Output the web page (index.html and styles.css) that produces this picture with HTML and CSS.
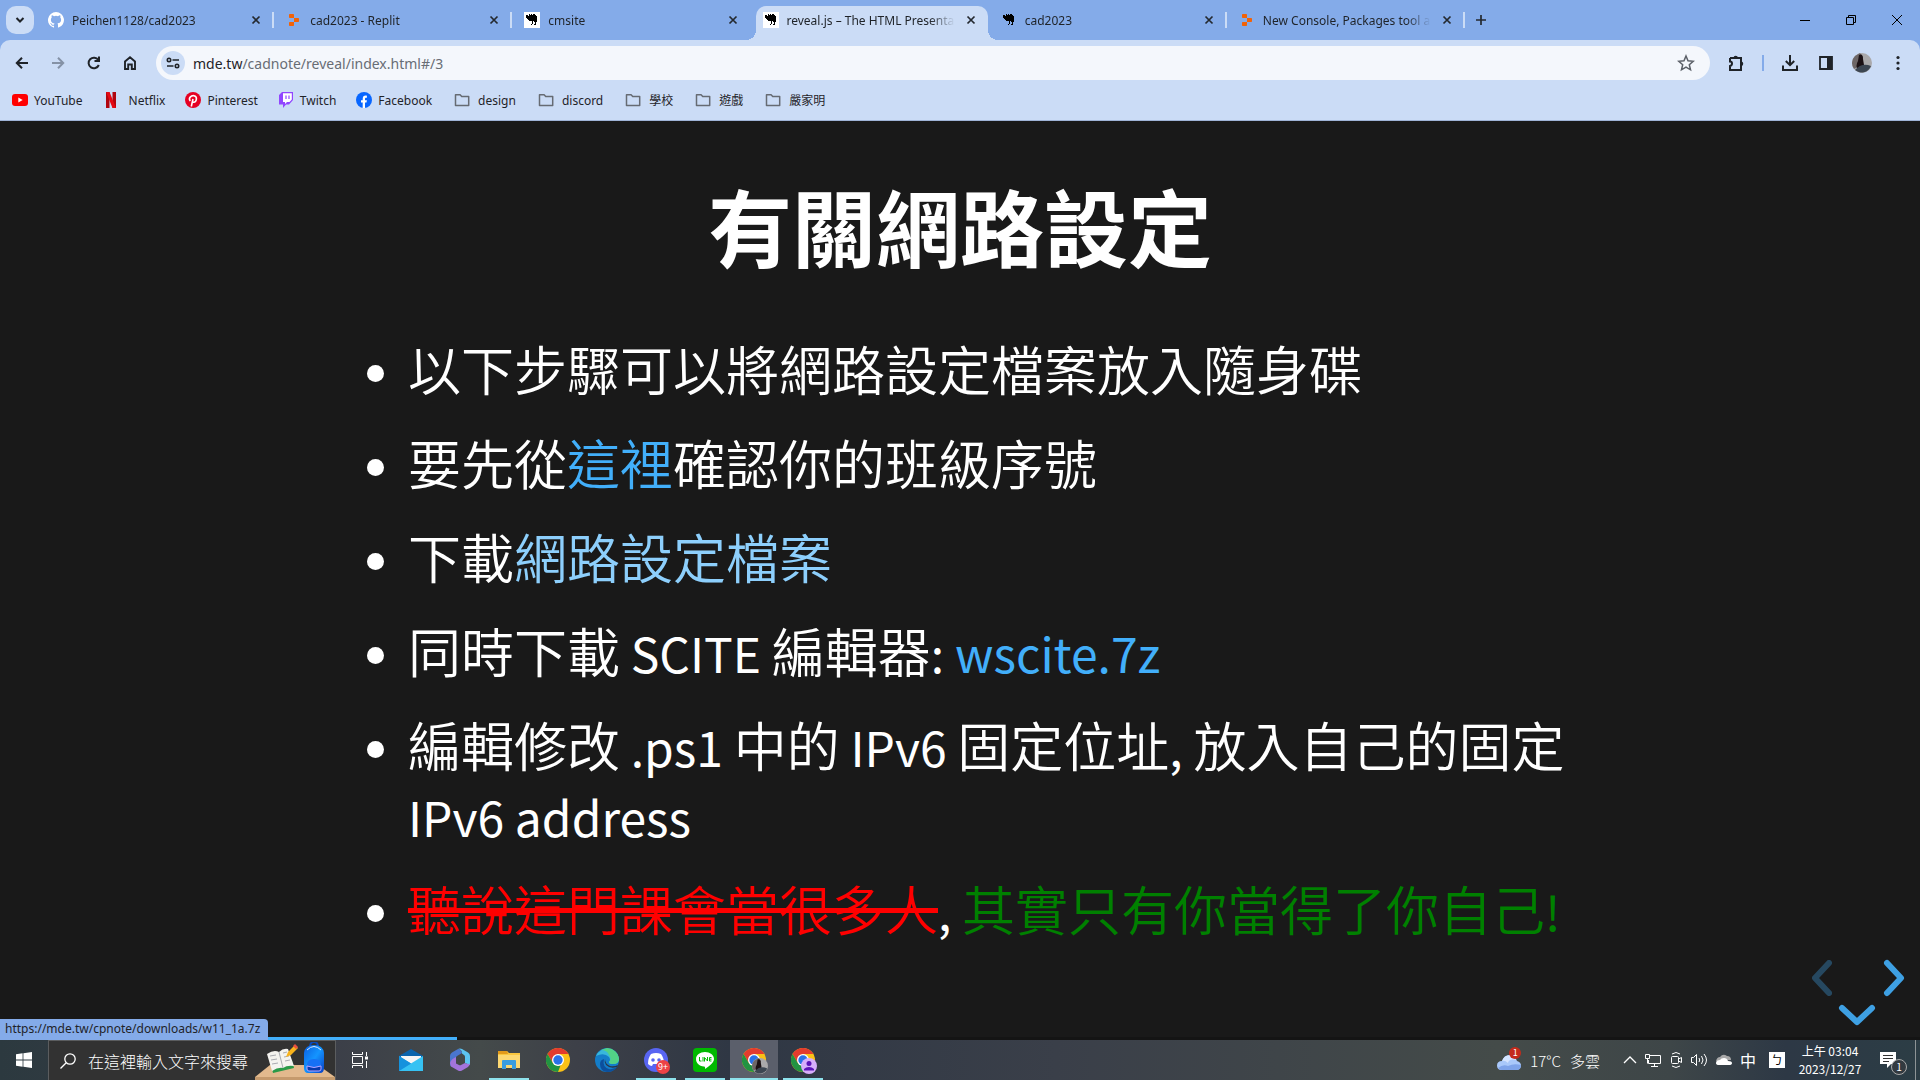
FILE: index.html
```
<!DOCTYPE html>
<html lang="zh-Hant">
<head>
<meta charset="utf-8">
<title>reveal.js – The HTML Presentation Framework</title>
<link rel="stylesheet" href="styles.css">
</head>
<body>
<svg class="defs" aria-hidden="true">
  <defs>
    <symbol id="close" viewBox="0 0 16 16"><path d="M4.500 4.500l7 7M11.500 4.500l-7 7" stroke="#24292f" stroke-width="1.700" fill="none"/></symbol>
    <symbol id="folder" viewBox="0 0 16 16"><path d="M1.500 2.800h4.600l1.600 1.700h7v9H1.500z" stroke="#666b73" stroke-width="1.500" stroke-linejoin="round" fill="none"/></symbol>
    <symbol id="replit" viewBox="0 0 16 16"><path d="M3.800 2H7.200a.8.8 0 0 1 .8.800V6H3.800a.8.8 0 0 1-.8-.8V2.800a.8.8 0 0 1 .8-.8zM8 6h4.200a.8.8 0 0 1 .8.800v2.400a.8.8 0 0 1-.8.800H8zM3.800 10H8v3.200a.8.800 0 0 1-.8.800H3.800a.8.8 0 0 1-.8-.8v-2.400a.8.8 0 0 1 .8-.8z" fill="#f26207"/></symbol>
    <symbol id="camel" viewBox="0 0 16 16"><path d="M5 2h1v1h1V2h1v1h1V2h2v1h1v1h1v6h-1v3h-2v-1h1v-2h-1v-1H9v3H8v1H7v-1h1V9H5V8H4V7H3V6H2V3h2v1h1z"/></symbol>
    <symbol id="chrome" viewBox="0 0 24 24"><circle cx="12" cy="12" r="12" fill="#fbc116"/><path d="M12 6h10.400A12 12 0 0 0 1.600 6l5.200 9z" fill="#e33b2e"/><path d="M1.600 6l5.200 9 5.200 3 2.600-.7L12 24A12 12 0 0 1 1.600 6z" fill="#229342"/><circle cx="12" cy="12" r="6" fill="#fff"/><circle cx="12" cy="12" r="4.700" fill="#2a72e8"/></symbol>
    <symbol id="avatar" viewBox="0 0 20 20"><circle cx="10" cy="10" r="10" fill="#aaa9ab"/><path d="M3 3a10 10 0 0 0-1 13l7-4 2-8-3-4z" fill="#6d6666"/><path d="M7 2q4-2 4 4l1 6-6 5q-3-4 0-9z" fill="#1b1114"/><path d="M3 17q7-8 16-4a10 10 0 0 1-16 4z" fill="#3c4652"/></symbol>
  </defs>
</svg>

<header class="browser">
  <div class="tabstrip">
    <button class="tab-search" aria-label="搜尋分頁"><svg width="16" height="16" viewBox="0 0 16 16"><path d="M4.500 6l3.500 3.500L11.500 6" fill="none" stroke="#1f2328" stroke-width="2"/></svg></button>
    <div class="tabs">
      <div class="tab divided"><svg class="fav" viewBox="0 0 16 16"><path fill="#fff" d="M8 0a8 8 0 0 0-2.530 15.590c.4.070.55-.17.550-.38v-1.490c-2.230.480-2.700-.95-2.700-.95-.36-.93-.89-1.170-.89-1.170-.73-.5.050-.49.050-.49.800.060 1.230.830 1.230.830.720 1.220 1.870.870 2.330.660.070-.52.280-.87.500-1.070-1.770-.2-3.640-.89-3.640-3.950 0-.87.310-1.590.820-2.150-.08-.2-.36-1.020.080-2.120 0 0 .67-.21 2.200.820a7.600 7.600 0 0 1 4 0c1.530-1.040 2.200-.82 2.200-.82.440 1.100.160 1.920.080 2.120.510.560.820 1.270.820 2.150 0 3.070-1.870 3.750-3.650 3.950.290.250.540.730.540 1.480v2.190c0 .21.150.460.550.380A8 8 0 0 0 8 0z"/></svg><span class="tab-title">Peichen1128/cad2023</span><button class="tab-close" aria-label="關閉"><svg><use href="#close"/></svg></button></div>
      <div class="tab divided"><svg class="fav"><use href="#replit"/></svg><span class="tab-title">cad2023 - Replit</span><button class="tab-close" aria-label="關閉"><svg><use href="#close"/></svg></button></div>
      <div class="tab"><svg class="fav white"><use href="#camel"/></svg><span class="tab-title">cmsite</span><button class="tab-close" aria-label="關閉"><svg><use href="#close"/></svg></button></div>
      <div class="tab active"><svg class="fav white"><use href="#camel"/></svg><span class="tab-title">reveal.js – The HTML Presenta</span><button class="tab-close" aria-label="關閉"><svg><use href="#close"/></svg></button></div>
      <div class="tab divided"><svg class="fav"><use href="#camel"/></svg><span class="tab-title">cad2023</span><button class="tab-close" aria-label="關閉"><svg><use href="#close"/></svg></button></div>
      <div class="tab divided"><svg class="fav"><use href="#replit"/></svg><span class="tab-title">New Console, Packages tool a</span><button class="tab-close" aria-label="關閉"><svg><use href="#close"/></svg></button></div>
    </div>
    <button class="new-tab" aria-label="新分頁"><svg width="16" height="16" viewBox="0 0 16 16"><path d="M8 3v10M3 8h10" stroke="#24292f" stroke-width="1.700"/></svg></button>
    <div class="window-buttons">
      <button aria-label="最小化"><svg width="12" height="12" viewBox="0 0 12 12"><path d="M1 6.500h10" stroke="#000"/></svg></button>
      <button aria-label="還原"><svg width="12" height="12" viewBox="0 0 12 12"><path d="M1.500 3.500h7v7h-7zM3.500 3.500v-2h7v7h-2" fill="none" stroke="#000"/></svg></button>
      <button aria-label="關閉"><svg width="12" height="12" viewBox="0 0 12 12"><path d="M1 1l10 10M11 1L1 11" stroke="#000"/></svg></button>
    </div>
  </div>

  <div class="toolbar">
    <nav class="nav-buttons">
      <button aria-label="上一頁"><svg width="16" height="16" viewBox="0 0 16 16"><path d="M14 8H3M8 2.800L2.800 8 8 13.200" fill="none" stroke="#1f2328" stroke-width="2"/></svg></button>
      <button aria-label="下一頁"><svg width="16" height="16" viewBox="0 0 16 16"><path d="M2 8h11M8 2.800L13.200 8 8 13.200" fill="none" stroke="#8592a6" stroke-width="2"/></svg></button>
      <button aria-label="重新載入"><svg width="16" height="16" viewBox="0 0 16 16"><path d="M12.800 10A5.300 5.300 0 1 1 12.300 5" fill="none" stroke="#1f2328" stroke-width="2"/><path d="M14 1.500V7H8.500V5H12V1.500z" fill="#1f2328"/></svg></button>
      <button aria-label="首頁"><svg width="16" height="16" viewBox="0 0 16 16"><path d="M3 14V6.500L8 2.300l5 4.200V14H9.800V9.500H6.200V14z" fill="none" stroke="#1f2328" stroke-width="1.900"/></svg></button>
    </nav>
    <div class="omnibox">
      <button class="site-info" aria-label="網站資訊"><svg width="16" height="16" viewBox="0 0 16 16"><g fill="none" stroke="#1f2328" stroke-width="1.600"><circle cx="4" cy="5" r="1.700"/><circle cx="12" cy="11" r="1.700"/><path d="M7.500 5H14M2 11h6.500"/></g></svg></button>
      <a class="url" href="#/3">mde.tw<span>/cadnote/reveal/index.html#/3</span></a>
      <button class="star" aria-label="加入書籤"><svg width="18" height="18" viewBox="0 0 18 18"><path d="M9 2l2 4.800 5.200.500-3.900 3.400 1.200 5.100L9 13.100l-4.500 2.700 1.200-5.100L1.800 7.300 7 6.800z" fill="none" stroke="#5b6068" stroke-width="1.500"/></svg></button>
    </div>
    <div class="tools">
      <button aria-label="擴充功能"><svg width="18" height="18" viewBox="0 0 18 18"><path d="M3 4h11v4.500M14 8v8H3v-4q2-.5 2-2.500T3 7.500V4" fill="none" stroke="#1f2328" stroke-width="2"/><path d="M6.500 4a2.200 2.200 0 0 1 4.400 0zM14 7.500a2.200 2.200 0 0 1 0 4.500z" fill="#1f2328"/></svg></button>
      <i class="tool-divider"></i>
      <button aria-label="下載"><svg width="18" height="18" viewBox="0 0 18 18"><path d="M9 1v10M4.800 7L9 11.200 13.200 7M2 11.500V16h14v-4.500" fill="none" stroke="#1f2328" stroke-width="2"/></svg></button>
      <button aria-label="側邊面板"><svg width="18" height="18" viewBox="0 0 18 18"><path d="M3 3h12v12H3z" fill="none" stroke="#1f2328" stroke-width="1.800"/><path d="M10 3h5v12h-5z" fill="#1f2328"/></svg></button>
      <button aria-label="個人資料"><svg width="20" height="20"><use href="#avatar"/></svg></button>
      <button aria-label="選單"><svg width="18" height="18" viewBox="0 0 18 18" fill="#1f2328"><circle cx="9" cy="3.500" r="1.600"/><circle cx="9" cy="9" r="1.600"/><circle cx="9" cy="14.500" r="1.600"/></svg></button>
    </div>
  </div>

  <nav class="bookmarks">
    <a href="#yt"><svg viewBox="0 0 16 16"><rect y="2" width="16" height="12" rx="3" fill="#f00"/><path d="M6.300 5.500v5l4.400-2.500z" fill="#fff"/></svg>YouTube</a>
    <a href="#nf" class="wide"><svg viewBox="0 0 16 16"><path d="M3 0h3.500v16H3zM9.500 0H13v16H9.500z" fill="#b1060f"/><path d="M3 0h3.500L13 16H9.500z" fill="#e50914"/></svg>Netflix</a>
    <a href="#pin"><svg viewBox="0 0 16 16"><circle cx="8" cy="8" r="8" fill="#e60023"/><path d="M6.300 14.500L8 7M5.300 9Q3.600 7 5.200 5.100 6.700 3.400 9 3.700q2.700.6 2.400 3.300Q11 10.200 8.700 10.300q-1.200-.1-1.600-.9" fill="none" stroke="#fff" stroke-width="1.600"/></svg>Pinterest</a>
    <a href="#tw"><svg viewBox="0 0 16 16"><path d="M4 0h11v8l-4 4.500H8L5 16v-3.500H1V3z" fill="#9146ff"/><path d="M5 1.200h8.800v6.300L11.500 10H9l-2 2v-2H5z" fill="#fff"/><path d="M8 3.500v3.500M11 3.500v3.500" stroke="#9146ff" stroke-width="1.200"/></svg>Twitch</a>
    <a href="#fb"><svg viewBox="0 0 16 16"><circle cx="8" cy="8" r="8" fill="#0866ff"/><path d="M6.700 15.900v-5.300H5V8.200h1.700V7c0-2.700 1.300-3.700 4.200-3.300v2.100c-1.500-.1-1.900.1-1.900 1.300v1.100h1.900l-.4 2.400H9v5.300z" fill="#fff"/></svg>Facebook</a>
    <a href="#design" class="folder"><svg><use href="#folder"/></svg>design</a>
    <a href="#discord" class="folder"><svg><use href="#folder"/></svg>discord</a>
    <a href="#school" class="folder"><svg><use href="#folder"/></svg>學校</a>
    <a href="#game" class="folder"><svg><use href="#folder"/></svg>遊戲</a>
    <a href="#yen" class="folder"><svg><use href="#folder"/></svg>嚴家明</a>
  </nav>
</header>

<main class="reveal">
  <section class="slide">
    <h1>有關網路設定</h1>
    <ul>
      <li>以下步驟可以將網路設定檔案放入隨身碟</li>
      <li>要先從<a href="#list">這裡</a>確認你的班級序號</li>
      <li>下載<a href="#w11" class="hovered">網路設定檔案</a></li>
      <li>同時下載<span class="latin"> SCITE </span>編輯器<span class="latin">: <a href="#wscite">wscite.7z</a></span></li>
      <li>編輯修改<span class="latin"> .ps1 </span>中的<span class="latin"> IPv6 </span>固定位址<span class="latin">, </span>放入自己的固定<span class="latin"> IPv6 address</span></li>
      <li><del>聽說這門課會當很多人</del><span class="latin">, </span><span class="green">其實只有你當得了你自己<span class="latin">!</span></span></li>
    </ul>
  </section>
  <div class="controls">
    <button class="left" aria-label="previous slide"><svg width="22" height="40" viewBox="0 0 22 40"><path d="M18 5L4 20l14 15"/></svg></button>
    <button class="right" aria-label="next slide"><svg width="22" height="40" viewBox="0 0 22 40"><path d="M4 5l14 15L4 35"/></svg></button>
    <button class="down" aria-label="below slide"><svg width="40" height="22" viewBox="0 0 40 22"><path d="M5 4l15 14L35 4"/></svg></button>
  </div>
  <div class="progress"><i></i></div>
  <div class="status">https://mde.tw/cpnote/downloads/w11_1a.7z</div>
</main>

<footer class="taskbar">
  <button class="start" aria-label="開始"><svg width="16" height="16" viewBox="0 0 16 16" fill="#fff"><path d="M0 2.200l6.600-.9v6.300H0zM7.400 1.200L16 0v7.600H7.400zM0 8.400h6.600v6.300L0 13.800zM7.400 8.400H16V16l-8.600-1.200z"/></svg></button>
  <label class="search">
    <svg width="16" height="16" viewBox="0 0 16 16" fill="none" stroke="#fff" stroke-width="1.300"><circle cx="10" cy="6" r="5.200"/><path d="M6.200 9.800L.5 15.500"/></svg>
    <input type="text" placeholder="在這裡輸入文字來搜尋" aria-label="搜尋">
    <svg class="desk" width="80" height="38" viewBox="0 0 80 38">
      <defs><linearGradient id="bag" x1="0" x2="1" y2="1"><stop stop-color="#0b5ee0"/><stop offset=".5" stop-color="#1495ff"/><stop offset="1" stop-color="#0a3fc4"/></linearGradient></defs>
      <path d="M0 35L15 23h48l17 12v3H0z" fill="#e2b98d"/><path d="M0 35h80v3H0z" fill="#c59a6d"/>
      <path d="M14 14l4 17 21-5-2-8z" fill="#2a9a48"/><path d="M12 12q7-5 12-2 4-4 9-3l6 17q-7-1-11 2-5-1-11 3z" fill="#f4f3ef"/><path d="M24 10l4 16M15 14l6-1m-5 5l6-1m-5 5l6-1M28 11l4-1m-3 5l5-1m-4 5l5-1" stroke="#a9abb0" fill="none"/>
      <path d="M31 15l2-5 7-7 3 3-7 7z" fill="#f9b31c"/><path d="M38 4l2-2 3 3-2 2z" fill="#e85040"/>
      <path d="M55 5q0-5 4-5t4 5" fill="none" stroke="#0a49bd" stroke-width="2"/><path d="M49 11q1-8 10-8t10 8v15q0 5-4 5H53q-4 0-4-5z" fill="url(#bag)"/><path d="M52 8q7-7 14 0" stroke="#d9e8ff" stroke-width="1" fill="none"/><path d="M52 28v-5q0-6 7-6t7 6v5z" fill="#1670f5"/><path d="M52 24q7 3 14 0v3q0 2-2 2H54q-2 0-2-2z" fill="#0738ac" stroke="#b9a4ff"/>
    </svg>
  </label>
  <div class="apps">
    <button class="task-view" aria-label="工作檢視"><svg width="16" height="16" viewBox="0 0 16 16" fill="none" stroke="#fff"><path d="M.5 0v2.500h10V0M.5 4.500h10v7H.5zM.5 16v-2.500h10V16M14.500 0v4M14.500 9v7"/><path d="M13 4.500h3v3h-3z" fill="#fff" stroke="none"/></svg></button>
    <button aria-label="郵件"><svg width="24" height="24" viewBox="0 0 24 24"><path d="M0 8l12-7 12 7v3H0z" fill="#0a64ad"/><path d="M2 8h20v8H2z" fill="#f5f5f5"/><path d="M0 8l24 15H0z" fill="#28a8ea"/><path d="M24 8L0 23h24z" fill="#36c2f3"/><path d="M0 8l12 7.500L0 23z" fill="#1592dd"/></svg></button>
    <button aria-label="Microsoft 365"><svg width="22" height="24" viewBox="0 0 22 24"><path d="M9 1L3 4.500Q1 5.700 1 8v8q0 1.500 1 2.500l5-2.500V9.500q0-1 1-1.500l5-3q-1-4-4-4z" fill="#4a76cf"/><path d="M9 1q4 0 4 4.500L15 7q1 .6 1 2v6l5 2V8q0-2.300-2-3.500L13 1q-2-1.200-4 0z" fill="#5cc4f2"/><path d="M2 18.500L9 22.500q2 1.200 4 0l6-3.500q2-1.200 2-4-1 2-5 0l-4 2q-1 .6-2 0l-3-1.500V9q-5 2-6 6z" fill="#a374dc"/></svg></button>
    <button class="open" aria-label="檔案總管"><svg width="22" height="20" viewBox="0 0 22 20"><path d="M0 1h9l2 2h11v15H0z" fill="#f9c63f"/><path d="M0 1h9l1 3H0z" fill="#e29a1a"/><path d="M0 5h22v13H0z" fill="#fcd872"/><path d="M4 19v-8q0-1 1-1h12q1 0 1 1v8h-4v-4H8v4z" fill="#3a9de0"/></svg></button>
    <button aria-label="Chrome"><svg width="24" height="24"><use href="#chrome"/></svg></button>
    <button aria-label="Edge"><svg width="24" height="24" viewBox="0 0 24 24"><circle cx="12" cy="12" r="12" fill="#147dc9"/><path d="M1 8A12 12 0 0 1 24 11q0 5-6 5-4 0-4-2 2-2 0-5-5-5-13-1z" fill="#38b7dc"/><path d="M12 0a12 12 0 0 1 12 11q0 5-6 5-4 0-4-2 3-3 0-7-2-5-8-5z" fill="#52d287"/><path d="M9 11q-2 8 5 10 5 1 9-3-4 6-11 6-7-1-7-8 0-4 4-5z" fill="#0c4f9c"/><path d="M10 11q0 5 5 7 4 1 8-1l-1 2q-7 2-11-2-2-3-1-6z" fill="#2b3646"/></svg></button>
    <button class="open" aria-label="Discord"><svg width="24" height="24" viewBox="0 0 24 24"><circle cx="12" cy="12" r="12" fill="#5865f2"/><path d="M7 6q5-2 10 0 3 4 3 10-2 2-4 2l-1-2H9l-1 2q-2 0-4-2 0-6 3-10z" fill="#fff"/><circle cx="9" cy="12" r="1.800" fill="#5865f2"/><circle cx="15" cy="12" r="1.800" fill="#5865f2"/></svg><b class="badge red">9+</b></button>
    <button class="open" aria-label="LINE"><svg width="24" height="24" viewBox="0 0 24 24"><rect width="24" height="24" rx="4" fill="#00b900"/><path d="M12 4c5 0 9 3 9 7 0 3-4 7-9 10 0-1 .5-2.500-1-2.600C6 18 3 15 3 11c0-4 4-7 9-7z" fill="#fff"/><path d="M6.500 9v4h2M10 9v4.500M11.500 13.500V9.500l3 3.500V9M18.500 9.500h-2v3.500h2m-2-1.800h2" stroke="#00b900" fill="none"/></svg></button>
    <button class="open current" aria-label="Chrome 視窗"><svg width="24" height="24"><use href="#chrome"/></svg><svg class="badge" width="16" height="16"><use href="#avatar"/></svg></button>
    <button class="open" aria-label="Chrome 訪客"><svg width="24" height="24"><use href="#chrome"/></svg><svg class="badge" width="16" height="16" viewBox="0 0 16 16"><circle cx="8" cy="8" r="8" fill="#d7aefb"/><circle cx="8" cy="5.500" r="2.500" fill="#5b14b8"/><path d="M3 12.500V11q2-2 5-2t5 2v1.500z" fill="#5b14b8"/></svg></button>
  </div>
  <div class="tray">
    <div class="weather"><svg width="24" height="26" viewBox="0 0 24 26"><path d="M5 23q-5 0-5-4.500T5 14q2-6 8-6 5 0 7 6 4 1 4 4.500T20 23z" fill="#a9c8fa"/><path d="M1 21q5-4 10-2 6-3 13-1 0 5-4 5H5q-3 0-4-2z" fill="#7fa4ea"/><path d="M5 14q2-6 8-6 5 0 6 5-7-2-8 3-3-3-6-2z" fill="#d5e4ff"/></svg><b class="alert">1</b><span>17°C</span><span>多雲</span></div>
    <svg class="caret" width="14" height="10" viewBox="0 0 14 10" fill="none" stroke="#fff" stroke-width="1.300"><path d="M1 8l6-6 6 6"/></svg>
    <svg width="18" height="16" viewBox="0 0 18 16" fill="none" stroke="#fff"><path d="M6 3.500h10.500v8H4.500V8M1.500 2.500h4v4h-4zM3.500 6.500v5M7 14.500h7M10.500 11.500v3"/></svg>
    <svg width="14" height="18" viewBox="0 0 14 18" fill="none" stroke="#fff"><rect x="2.500" y="5.500" width="7" height="7" rx="1"/><path d="M9.500 8l3-1.500v5L9.500 10M3 3q4-3 8 0M3 15q4 3 8 0"/></svg>
    <svg width="18" height="16" viewBox="0 0 18 16" fill="none" stroke="#fff"><path d="M1.500 5.500h2l3-3v11l-3-3h-2zM9 6q1.500 2 0 4M11.500 4q3 4 0 8M14 2q5 6 0 12"/></svg>
    <svg width="18" height="12" viewBox="0 0 18 12"><path d="M1 7q1-4 4-4 3-4 7-1 4 0 4 4z" fill="#a8a8a8"/><path d="M4 11q-3 0-3-2 0-3 4-3 1-2 4-2t4 3q4 0 4 2t-3 2z" fill="#fff"/></svg>
    <span class="lang">中</span>
    <span class="ime">ㄅ</span>
    <time class="clock"><span>上午 03:04</span><span>2023/12/27</span></time>
    <button class="notice" aria-label="通知"><svg width="18" height="18" viewBox="0 0 18 18"><path d="M1 1h16v12h-5l-4 4v-4H1z" fill="#fff"/><path d="M4 4.500h10M4 7.500h10M4 10.500h6" stroke="#333"/></svg><b>1</b></button>
    <i class="show-desktop"></i>
  </div>
</footer>
</body>
</html>
```
FILE: styles.css
```
* { box-sizing: border-box; }
body {
  margin: 0;
  min-height: 100vh;
  display: flex;
  flex-direction: column;
  background: #191919;
  font-family: "Noto Sans", "Noto Sans CJK TC", sans-serif;
  font-size: 12px;
  color: #1f2328;
}
button { border: 0; padding: 0; margin: 0; background: none; font: inherit; color: inherit; display: flex; align-items: center; justify-content: center; flex: none; }
a { color: inherit; text-decoration: none; }
svg { display: block; flex: none; }
.defs { position: absolute; width: 0; height: 0; }

/* tab strip */
.browser { background: #84abe9; border-bottom: 1px solid #9fb3d6; }
.tabstrip { display: flex; align-items: center; height: 40px; padding-left: 6px; }
.tab-search { width: 28px; height: 28px; border-radius: 10px; background: #cbdcf6; }
.tabs { display: flex; align-self: stretch; align-items: flex-end; padding-left: 4px; flex: 0 1 1433px; min-width: 0; }
.tab { position: relative; display: flex; align-items: center; gap: 8px; flex: 1 1 0; min-width: 0; height: 34px; padding: 0 12px 6px 10px; }
.tab.divided::after { content: ""; position: absolute; right: 2px; top: 6px; width: 2px; height: 16px; background: #cbdcf6; }
.tab.active { margin: 0 3px; padding: 0 9px 6px 7px; background: #cbdcf6; border-radius: 10px 10px 0 0; }
.tab.active::before, .tab.active::after { content: ""; position: absolute; bottom: 0; width: 10px; height: 10px; }
.tab.active::before { left: -10px; background: radial-gradient(circle at 0 0, transparent 10px, #cbdcf6 10px); }
.tab.active::after { right: -10px; background: radial-gradient(circle at 100% 0, transparent 10px, #cbdcf6 10px); }
.fav { width: 16px; height: 16px; }
.fav.white { background: #fff; }
.tab-title { flex: 1; min-width: 0; overflow: hidden; white-space: nowrap; line-height: 16px; padding-top: 2px; mask-image: linear-gradient(to right, #000 85%, transparent); }
.tab-close svg { width: 16px; height: 16px; }
.new-tab { width: 28px; height: 28px; }
.window-buttons { display: flex; margin-left: auto; }
.window-buttons button { width: 46px; height: 40px; }

/* address row */
.toolbar { display: flex; align-items: center; height: 46px; background: #cbdcf6; border-radius: 10px 10px 0 0; padding: 0 4px; }
.nav-buttons { display: flex; padding-right: 8px; }
.nav-buttons button { width: 36px; height: 34px; }
.omnibox { display: flex; align-items: center; flex: 1; height: 34px; border-radius: 17px; background: #f4f7fc; padding: 0 15px 0 5px; }
.site-info { width: 24px; height: 24px; border-radius: 12px; background: #cbdcf6; }
.url { flex: 1; padding-left: 8px; font-size: 14px; }
.url span { color: #686d75; }
.tools { display: flex; align-items: center; padding-left: 8px; }
.tools button { width: 36px; height: 34px; }
.tool-divider { width: 2px; height: 16px; margin: 0 8px; background: #84abe9; }

/* bookmarks */
.bookmarks { display: flex; align-items: center; gap: 20px; height: 34px; padding: 0 12px 6px; background: #cbdcf6; font-size: 12px; }
.bookmarks a { display: flex; align-items: center; gap: 6px; white-space: nowrap; }
.bookmarks svg { width: 16px; height: 16px; }
.bookmarks .wide { gap: 10px; }
.bookmarks .folder { gap: 8px; margin-left: 2px; }

/* slide */
.reveal { position: relative; flex: 1; background: #191919; color: #fff; font-family: "Noto Sans CJK TC", sans-serif; padding-bottom: 50px; }
.slide { max-width: 1210px; margin: 0 auto; padding-top: 53px; }
.slide h1 { margin: 0 0 57px; font-size: 84px; line-height: 102px; font-weight: 700; text-align: center; }
.slide ul { margin: 0; padding: 0 0 0 53px; font-size: 53px; line-height: 70px; font-weight: 350; }
.slide li { margin-bottom: 24px; }
.slide li::marker { font-size: 44px; }
.slide li a { color: #42affa; }
.slide li a.hovered { color: #8dcffc; }
.latin { font-size: 48px; line-height: 1; font-weight: 400; }
.slide del { color: #f00; text-decoration-thickness: 5px; }
.green { color: green; }

.controls { position: absolute; right: 15px; bottom: 14px; width: 94px; height: 68px; }
.controls button { position: absolute; }
.controls path { fill: none; stroke: #42affa; stroke-width: 6; stroke-linecap: round; stroke-linejoin: round; opacity: .9; }
.controls .left { left: 0; top: 0; opacity: .35; }
.controls .right { right: 0; top: 0; }
.controls .down { left: 26px; bottom: 0; }
.progress { position: absolute; left: 0; right: 0; bottom: 0; height: 3px; background: #141414; }
.progress i { display: block; width: 23.800%; height: 3px; background: #42affa; }
.status { position: absolute; left: 0; bottom: 0; height: 21px; line-height: 20px; padding: 0 8px 0 5px; background: #84abe9; color: #1f2328; border-radius: 0 4px 0 0; font-family: "Noto Sans", sans-serif; font-size: 12px; }

/* taskbar */
.taskbar { display: flex; height: 40px; color: #fff; background: linear-gradient(to right, #2c393f, #3a3d48 16%, #444a4a 25%, #3d4048 30%, #2f3744 38%, #3a3f49 55%, #444b49 78%, #3e4648 87%, #2d3845 93%, #2c3d45); font-family: "Noto Sans CJK TC", sans-serif; }
.start { width: 48px; }
.search { display: flex; align-items: center; width: 288px; border: 1px solid #5b5d5f; border-bottom: 0; background: #323232; padding-left: 11px; }
.search input { flex: 1; min-width: 0; margin-left: 12px; border: 0; padding: 0; background: none; font: 300 16px "Noto Sans CJK TC", sans-serif; color: #fff; }
.search input::placeholder { color: #fff; opacity: 1; }
.search .desk { align-self: flex-end; }
.apps { display: flex; gap: 1px; }
.apps button { position: relative; width: 48px; }
.apps .task-view { width: 50px; padding-right: 2px; }
.apps .open::after { content: ""; position: absolute; left: 4px; right: 4px; bottom: 0; height: 2px; background: #8ee2ec; }
.apps .current { background: #5b5f6b; }
.apps .current::after { left: 0; right: 0; }
.badge { position: absolute; right: 10px; bottom: 6px; }
.badge.red { width: 14px; height: 14px; border-radius: 7px; background: #ed4245; font-size: 9px; line-height: 14px; font-weight: 400; }
.tray { display: flex; align-items: center; margin-left: auto; gap: 7px; }
.weather { position: relative; display: flex; align-items: center; gap: 9px; font-size: 15px; font-weight: 300; margin-right: 16px; }
.alert { position: absolute; left: 12px; top: 0; width: 12px; height: 12px; border-radius: 6px; background: #c42b1c; font-size: 9px; line-height: 12px; text-align: center; font-weight: 400; }
.lang { font-size: 16px; line-height: 20px; }
.ime { width: 16px; height: 16px; margin-left: 6px; background: #fff; color: #000; font-size: 12px; line-height: 16px; text-align: center; }
.clock { display: flex; flex-direction: column; align-items: center; width: 76px; font-size: 12px; line-height: 18px; }
.notice { position: relative; width: 40px; height: 40px; justify-content: flex-start; padding-left: 4px; }
.notice b { position: absolute; right: 8px; bottom: 5px; width: 16px; height: 16px; border: 1px solid #aaa; border-radius: 8px; background: #333a40; font-size: 10px; line-height: 14px; font-weight: 400; }
.show-desktop { width: 5px; height: 40px; margin-left: -7px; border-left: 1px solid #8d9496; }
```
